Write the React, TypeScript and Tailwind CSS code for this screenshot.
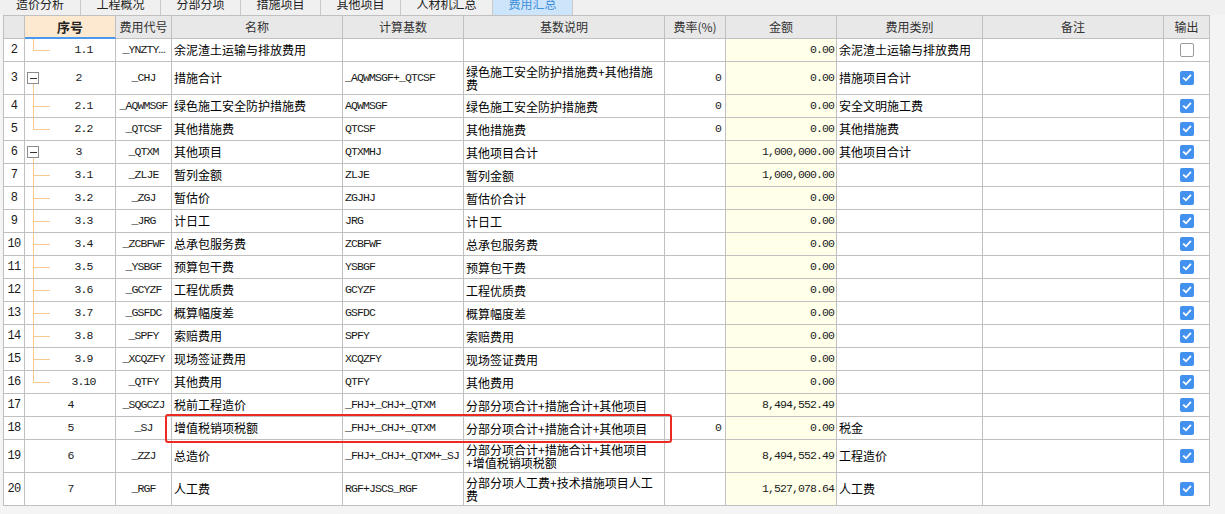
import React from 'react';

type Row = {
  n: number;
  seq: string;
  kind: 'child' | 'last' | 'box' | 'top';
  code: string;
  name: string;
  base: string;
  desc: string[];
  rate: string;
  amt: string;
  cat: string;
  chk: boolean;
  tall?: boolean;
};

const rows: Row[] = [
  { n: 2, seq: '1.1', kind: 'last', code: '_YNZTY…', name: '余泥渣土运输与排放费用', base: '', desc: [], rate: '', amt: '0.00', cat: '余泥渣土运输与排放费用', chk: false },
  { n: 3, seq: '2', kind: 'box', code: '_CHJ', name: '措施合计', base: '_AQWMSGF+_QTCSF', desc: ['绿色施工安全防护措施费+其他措施', '费'], rate: '0', amt: '0.00', cat: '措施项目合计', chk: true, tall: true },
  { n: 4, seq: '2.1', kind: 'child', code: '_AQWMSGF', name: '绿色施工安全防护措施费', base: 'AQWMSGF', desc: ['绿色施工安全防护措施费'], rate: '0', amt: '0.00', cat: '安全文明施工费', chk: true },
  { n: 5, seq: '2.2', kind: 'last', code: '_QTCSF', name: '其他措施费', base: 'QTCSF', desc: ['其他措施费'], rate: '0', amt: '0.00', cat: '其他措施费', chk: true },
  { n: 6, seq: '3', kind: 'box', code: '_QTXM', name: '其他项目', base: 'QTXMHJ', desc: ['其他项目合计'], rate: '', amt: '1,000,000.00', cat: '其他项目合计', chk: true },
  { n: 7, seq: '3.1', kind: 'child', code: '_ZLJE', name: '暂列金额', base: 'ZLJE', desc: ['暂列金额'], rate: '', amt: '1,000,000.00', cat: '', chk: true },
  { n: 8, seq: '3.2', kind: 'child', code: '_ZGJ', name: '暂估价', base: 'ZGJHJ', desc: ['暂估价合计'], rate: '', amt: '0.00', cat: '', chk: true },
  { n: 9, seq: '3.3', kind: 'child', code: '_JRG', name: '计日工', base: 'JRG', desc: ['计日工'], rate: '', amt: '0.00', cat: '', chk: true },
  { n: 10, seq: '3.4', kind: 'child', code: '_ZCBFWF', name: '总承包服务费', base: 'ZCBFWF', desc: ['总承包服务费'], rate: '', amt: '0.00', cat: '', chk: true },
  { n: 11, seq: '3.5', kind: 'child', code: '_YSBGF', name: '预算包干费', base: 'YSBGF', desc: ['预算包干费'], rate: '', amt: '0.00', cat: '', chk: true },
  { n: 12, seq: '3.6', kind: 'child', code: '_GCYZF', name: '工程优质费', base: 'GCYZF', desc: ['工程优质费'], rate: '', amt: '0.00', cat: '', chk: true },
  { n: 13, seq: '3.7', kind: 'child', code: '_GSFDC', name: '概算幅度差', base: 'GSFDC', desc: ['概算幅度差'], rate: '', amt: '0.00', cat: '', chk: true },
  { n: 14, seq: '3.8', kind: 'child', code: '_SPFY', name: '索赔费用', base: 'SPFY', desc: ['索赔费用'], rate: '', amt: '0.00', cat: '', chk: true },
  { n: 15, seq: '3.9', kind: 'child', code: '_XCQZFY', name: '现场签证费用', base: 'XCQZFY', desc: ['现场签证费用'], rate: '', amt: '0.00', cat: '', chk: true },
  { n: 16, seq: '3.10', kind: 'last', code: '_QTFY', name: '其他费用', base: 'QTFY', desc: ['其他费用'], rate: '', amt: '0.00', cat: '', chk: true },
  { n: 17, seq: '4', kind: 'top', code: '_SQGCZJ', name: '税前工程造价', base: '_FHJ+_CHJ+_QTXM', desc: ['分部分项合计+措施合计+其他项目'], rate: '', amt: '8,494,552.49', cat: '', chk: true },
  { n: 18, seq: '5', kind: 'top', code: '_SJ', name: '增值税销项税额', base: '_FHJ+_CHJ+_QTXM', desc: ['分部分项合计+措施合计+其他项目'], rate: '0', amt: '0.00', cat: '税金', chk: true },
  { n: 19, seq: '6', kind: 'top', code: '_ZZJ', name: '总造价', base: '_FHJ+_CHJ+_QTXM+_SJ', desc: ['分部分项合计+措施合计+其他项目', '+增值税销项税额'], rate: '', amt: '8,494,552.49', cat: '工程造价', chk: true, tall: true },
  { n: 20, seq: '7', kind: 'top', code: '_RGF', name: '人工费', base: 'RGF+JSCS_RGF', desc: ['分部分项人工费+技术措施项目人工', '费'], rate: '', amt: '1,527,078.64', cat: '人工费', chk: true, tall: true },
];

const tabs = ['造价分析', '工程概况', '分部分项', '措施项目', '其他项目', '人材机汇总', '费用汇总'];
const tabW = ['w-[81px]', 'w-[80px]', 'w-[80px]', 'w-[80px]', 'w-[80px]', 'w-[92px]', 'w-[80px]'];

const cell = 'border-r border-b border-[#c0c0c0] overflow-hidden';
const mono = "font-['Liberation_Mono',monospace] text-[11.5px] tracking-[-0.9px] text-[#1a1a1a]";
const cjk = "font-['Noto_Sans_CJK_SC',sans-serif] text-[12px] text-black";
const TREE = '#f8c88c';

function Tree({ kind }: { kind: Row['kind'] }) {
  if (kind === 'top') return null;
  if (kind === 'box') {
    return (
      <svg width="17" className="h-full shrink-0" shapeRendering="crispEdges">
        <line x1="8.5" y1="50%" x2="8.5" y2="100%" stroke={TREE} strokeWidth="1" />
        <svg x="2" y="50%" overflow="visible">
          <g transform="translate(0,-6)">
            <rect x="0.5" y="0.5" width="11" height="11" fill="#fff" stroke="#8c8c8c" />
            <line x1="3" y1="6.5" x2="10" y2="6.5" stroke="#333" />
          </g>
        </svg>
      </svg>
    );
  }
  return (
    <svg width="27" className="h-full shrink-0" shapeRendering="crispEdges">
      <line x1="8.5" y1="0" x2="8.5" y2={kind === 'last' ? '50%' : '100%'} stroke={TREE} strokeWidth="1" />
      <line x1="8" y1="50%" x2="25" y2="50%" stroke={TREE} strokeWidth="1" />
    </svg>
  );
}

function Check({ on }: { on: boolean }) {
  if (!on)
    return <div className="w-[14px] h-[14px] rounded-[2px] border border-[#9a9a9a] bg-white" />;
  return (
    <div className="w-[14px] h-[14px] rounded-[2px] bg-[#4291ef] flex items-center justify-center">
      <svg width="10" height="10" viewBox="0 0 10 10">
        <path d="M1.8 5.2 L4 7.3 L8.3 2.6" fill="none" stroke="#fff" strokeWidth="1.8" strokeLinecap="square" />
      </svg>
    </div>
  );
}

export default function App() {
  return (
    <div className="w-[1225px] h-[514px] overflow-hidden bg-[#f4f4f4] font-['Noto_Sans_CJK_SC',sans-serif]">
      <div className="flex h-[15px] overflow-hidden bg-[#f0f0f0]">
        {tabs.map((t, i) => (
          <div
            key={t}
            className={`${tabW[i]} shrink-0 flex items-end justify-center pb-[5px] border-r border-[#c9c9c9] text-[12px] leading-[12px] ${
              i === 6 ? 'bg-[#cde5fa] text-[#3e8fdc]' : 'bg-[#f0f0f0] text-[#222]'
            }`}
          >
            {t}
          </div>
        ))}
      </div>
      <div className="relative ml-[3px] w-[1207px] bg-white border-l border-t border-[#c0c0c0] grid grid-cols-[21px_91px_56px_171px_121px_201px_61px_111px_146px_181px_46px]">
        <div className={`${cell} h-[23px] bg-[#e8e8e8]`} />
        <div className="border-r border-[#c0c0c0] h-[23px] bg-[#fde9d0] border-b-2 border-b-[#4a98ef] flex items-center justify-center text-[13px] font-bold text-[#222]">
          序号
        </div>
        {['费用代号', '名称', '计算基数', '基数说明', '费率(%)', '金额', '费用类别', '备注', '输出'].map((h) => (
          <div key={h} className={`${cell} h-[23px] bg-[#e8e8e8] flex items-center justify-center text-[12px] text-[#333]`}>
            {h}
          </div>
        ))}
        {rows.map((r) => {
          const h = r.tall ? 'h-[33px]' : 'h-[23px]';
          return (
            <React.Fragment key={r.n}>
              <div className={`${cell} ${h} flex items-center justify-center font-['Liberation_Mono',monospace] text-[12px] tracking-[-0.8px] text-[#1a1a1a]`}>{r.n}</div>
              <div className={`${cell} ${h} flex items-stretch`}>
                <Tree kind={r.kind} />
                <div className={`flex-1 flex items-center justify-center ${mono} ${r.kind === 'top' ? 'pl-[1px]' : ''}`}>{r.seq}</div>
              </div>
              <div className={`${cell} ${h} flex items-center justify-center ${mono} whitespace-nowrap`}>{r.code}</div>
              <div className={`${cell} ${h} flex items-center pl-[2px] ${cjk} whitespace-nowrap`}>{r.name}</div>
              <div className={`${cell} ${h} flex items-center pl-[2px] ${mono} whitespace-nowrap`}>{r.base}</div>
              <div className={`${cell} ${h} flex flex-col justify-center pl-[2px] ${cjk} leading-[13px] whitespace-nowrap`}>
                {r.desc.map((d, i) => (
                  <span key={i}>{d}</span>
                ))}
              </div>
              <div className={`${cell} ${h} flex items-center justify-end pr-[4px] ${mono}`}>{r.rate}</div>
              <div className={`${cell} ${h} flex items-center justify-end pr-[2px] bg-[#ffffea] ${mono}`}>{r.amt}</div>
              <div className={`${cell} ${h} flex items-center pl-[2px] ${cjk} whitespace-nowrap`}>{r.cat}</div>
              <div className={`${cell} ${h}`} />
              <div className={`${cell} ${h} flex items-center justify-center`}>
                <Check on={r.chk} />
              </div>
            </React.Fragment>
          );
        })}
        <div className="absolute left-[161px] top-[398px] w-[507px] h-[29px] border-2 border-[#ec2a22] rounded-[3px] pointer-events-none" />
      </div>
    </div>
  );
}
